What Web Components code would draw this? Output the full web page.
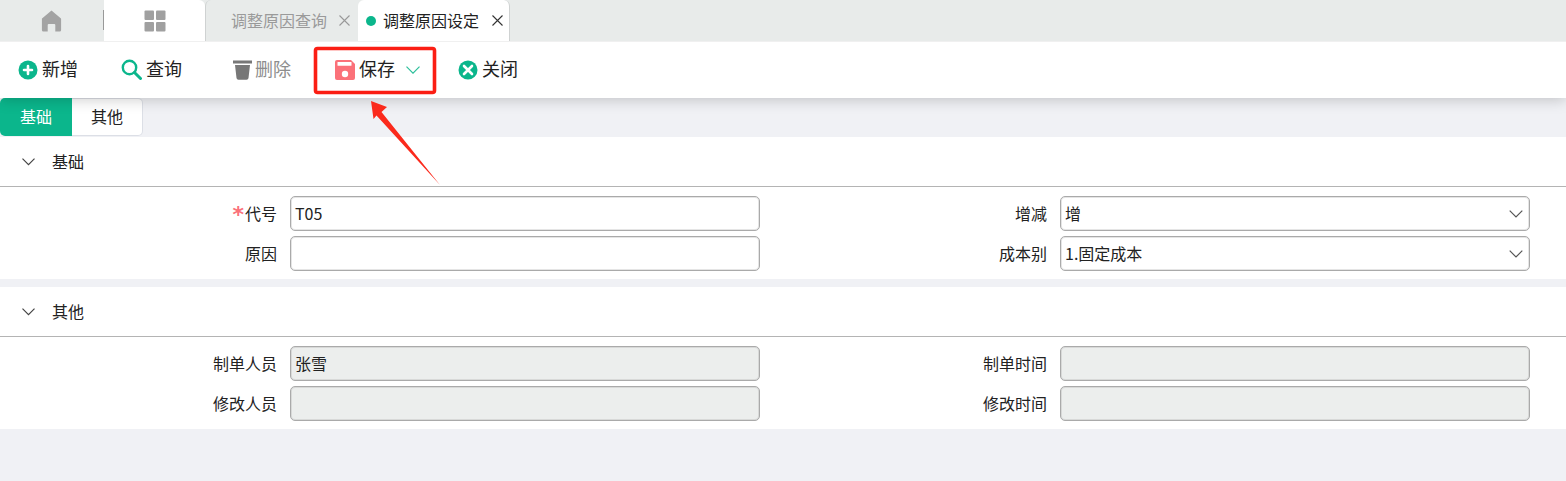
<!DOCTYPE html>
<html lang="zh-CN">
<head>
<meta charset="utf-8">
<title>调整原因设定</title>
<style>
html,body{margin:0;padding:0;height:100%;background:#f0f1f5;overflow:hidden}
body{position:relative;font:16px "Noto Sans CJK SC","Noto Sans",sans-serif;color:#222}
</style>
</head>
<body>
<app-tabs>
  <tab-item kind="home"><svg width="21" height="22" viewBox="0 0 21 22"><path d="M10.500.500 1.300 8.200a1 1 0 0 0-.4.800V20a1.500 1.500 0 0 0 1.500 1.500h4.300V15a1 1 0 0 1 1-1h5.600a1 1 0 0 1 1 1v6.500h4.300a1.500 1.500 0 0 0 1.500-1.500V9a1 1 0 0 0-.4-.8Z" fill="#a3a3a3"/></svg></tab-item>
  <tab-item kind="grid"><svg width="22" height="22" viewBox="0 0 22 22" fill="#a0a0a0"><rect x=".5" y=".5" width="9.500" height="9.500" rx="1"/><rect x="12" y=".5" width="9.500" height="9.500" rx="1"/><rect x=".5" y="12" width="9.500" height="9.500" rx="1"/><rect x="12" y="12" width="9.500" height="9.500" rx="1"/></svg></tab-item>
  <tab-item kind="page">调整原因查询</tab-item>
  <tab-item kind="page" active>调整原因设定</tab-item>
</app-tabs>

<app-toolbar>
  <tool-button style="margin-left:18px"><svg slot="icon" width="20" height="20" viewBox="0 0 20 20"><circle cx="10" cy="10" r="9.500" fill="#0bb68c"/><path d="M10 6v8M6 10h8" stroke="#fff" stroke-width="2.600" stroke-linecap="round"/></svg>新增</tool-button>
  <tool-button style="margin-left:43px"><svg slot="icon" width="21" height="21" viewBox="0 0 21 21" fill="none" stroke="#0bb68c"><circle cx="8.500" cy="8.500" r="6.700" stroke-width="2.400"/><path d="m13.500 13.500 6 6" stroke-width="3" stroke-linecap="round"/></svg>查询</tool-button>
  <tool-button style="margin-left:51px" disabled><svg slot="icon" width="19" height="20" viewBox="0 0 19 20" fill="#777" style="margin-right:-1px"><rect x="0" y="0.500" width="19" height="3"/><path d="M2 5h15l-1.500 13a2 2 0 0 1-2 1.800h-8a2 2 0 0 1-2-1.800Z"/></svg>删除</tool-button>
  <tool-button style="margin-left:44px"><svg slot="icon" width="20" height="20" viewBox="0 0 20 20"><path d="M2 0h14l4 4v14a2 2 0 0 1-2 2H2a2 2 0 0 1-2-2V2a2 2 0 0 1 2-2Z" fill="#fb7179"/><rect x="2.500" y="2" width="14" height="3.800" rx=".5" fill="#fff"/><circle cx="10" cy="14" r="3.200" fill="#fff"/></svg>保存<svg slot="after" width="14" height="8" viewBox="0 0 14 8" fill="none" stroke="#2dbf9b" stroke-width="1.200"><path d="m.5.700 6.500 6.500L13.500.7"/></svg></tool-button>
  <tool-button style="margin-left:38px"><svg slot="icon" width="20" height="20" viewBox="0 0 20 20"><circle cx="10" cy="10" r="9.500" fill="#0bb68c"/><path d="m6 6 8 8M14 6l-8 8" stroke="#fff" stroke-width="2.600" stroke-linecap="round"/></svg>关闭</tool-button>
</app-toolbar>

<form-tabs></form-tabs>

<form-section heading="基础">
  <form-field label="代号" required value="T05"></form-field>
  <form-field label="增减" select value="增"></form-field>
  <form-field label="原因"></form-field>
  <form-field label="成本别" select value="1.固定成本"></form-field>
</form-section>

<form-section heading="其他" style="margin-top:8px">
  <form-field label="制单人员" disabled value="张雪"></form-field>
  <form-field label="制单时间" disabled></form-field>
  <form-field label="修改人员" disabled></form-field>
  <form-field label="修改时间" disabled></form-field>
</form-section>

<call-out></call-out>

<script>
const shadow = (el, html) => { el.attachShadow({mode:'open'}).innerHTML = html; };

customElements.define('app-tabs', class extends HTMLElement {
  constructor(){ super(); shadow(this, `<style>
    :host{display:flex;height:41px;background:#e8ebea;box-sizing:border-box}
  </style><slot></slot>`); }
});

customElements.define('tab-item', class extends HTMLElement {
  constructor(){ super();
    const kind = this.getAttribute('kind');
    const active = this.hasAttribute('active');
    const extra = kind === 'page'
      ? `${active ? '<i class="dot"></i>' : ''}<span class="t"><slot></slot></span><svg class="x" width="11" height="11" viewBox="0 0 11 11" fill="none" stroke="${active ? '#333' : '#999'}" stroke-width="1.100"><path d="m.5.500 10 10M10.500.500l-10 10"/></svg>`
      : `<slot></slot>`;
    shadow(this, `<style>
      :host{display:flex;align-items:center;box-sizing:border-box;height:41px;flex:none;font-size:16px}
      :host([kind=home]){width:104px;padding-left:41px;position:relative}
      :host([kind=home])::after{content:"";position:absolute;right:0;top:10px;height:20px;width:1px;background:#999}
      :host([kind=grid]){width:101px;background:#fff;padding-left:40px;border-top-right-radius:6px}
      :host([kind=page]){width:153px;padding-left:25px;border-left:1px solid #cfd2d2;border-top-left-radius:6px;color:#9a9a9a}
      :host([kind=page][active]){width:152px;padding-left:8px;background:#fff;color:#222;border-left:0;border-right:1px solid #cfd2d2;border-top-right-radius:6px;border-top-left-radius:6px}
      svg{display:block}
      .dot{width:10px;height:10px;border-radius:50%;background:#0bb68c;margin-right:7px;flex:none}
      .t{white-space:nowrap;line-height:24px;padding-bottom:2px}
      .x{margin-left:12px;flex:none}
      :host([active]) .x{margin-left:13px}
    </style>${extra}`);
  }
});

customElements.define('app-toolbar', class extends HTMLElement {
  constructor(){ super(); shadow(this, `<style>
    :host{display:flex;align-items:center;box-sizing:border-box;height:57px;background:#fff;border-top:1px solid #f0f0f0;position:relative;z-index:2;box-shadow:0 1px 14px rgba(0,0,0,.22);clip-path:inset(0 0 -24px 0)}
  </style><slot></slot>`); }
});

customElements.define('tool-button', class extends HTMLElement {
  constructor(){ super(); shadow(this, `<style>
    :host{display:inline-flex;align-items:center;font-size:18px;line-height:26px;color:#222;white-space:nowrap;padding-bottom:5px}
    :host([disabled]){color:#8d8d8d}
    .i{display:flex;margin-right:4px;margin-top:4px}
    .a{display:flex;margin-top:5px}
    ::slotted([slot=after]){margin-left:11px}
  </style><span class="i"><slot name="icon"></slot></span><slot></slot><span class="a"><slot name="after"></slot></span>`); }
});

customElements.define('form-tabs', class extends HTMLElement {
  constructor(){ super(); shadow(this, `<style>
    :host{display:flex;height:39px;box-sizing:border-box;padding-bottom:1px;font-size:16px;line-height:36px;text-align:center}
    div{box-sizing:border-box;height:38px}
    .on{width:72px;background:#0bb68c;color:#fff;border-radius:5px 0 0 5px}
    .off{width:71px;background:#fff;color:#222;border:1px solid #dcdfe6;border-left:0;border-radius:0 5px 5px 0;line-height:34px}
  </style><div class="on">基础</div><div class="off">其他</div>`); }
});

customElements.define('form-section', class extends HTMLElement {
  constructor(){ super(); shadow(this, `<style>
    :host{display:block;background:#fff}
    header{display:flex;align-items:center;box-sizing:border-box;border-bottom:1px solid #b4b4b4;height:50px;padding-left:22px;font-size:16px;color:#222}
    header span{padding-bottom:2px}
    svg{margin-right:17px;display:block}
    .g{display:grid;grid-template-columns:760px 770px;row-gap:5px;padding:9px 0 8px}
  </style><header><svg width="13" height="8" viewBox="0 0 13 8" fill="none" stroke="#444" stroke-width="1.200"><path d="m.5.700 6 6 6-6"/></svg><span>${this.getAttribute('heading')}</span></header><div class="g"><slot></slot></div>`); }
});

customElements.define('form-field', class extends HTMLElement {
  constructor(){ super();
    const value = this.getAttribute('value') || '';
    const req = this.hasAttribute('required') ? '<span class="req">*</span>' : '';
    const arrow = this.hasAttribute('select') ? '<svg width="14" height="8" viewBox="0 0 14 8" fill="none" stroke="#555" stroke-width="1.200"><path d="m.7.700 6.300 6.300L13.300.7"/></svg>' : '';
    shadow(this, `<style>
      :host{display:grid;grid-template-columns:1fr 470px;column-gap:13px;align-items:center;font-size:16px;color:#222}
      label{text-align:right;white-space:nowrap;line-height:24px;padding-bottom:2px}
      .req{color:#fb7179;font:bold 22px/14px "DejaVu Sans",sans-serif;margin-right:1px;display:inline-block;vertical-align:-2px}
      .box{display:flex;align-items:center;justify-content:space-between;box-sizing:border-box;height:35px;border:1px solid #aaa;border-radius:5px;padding:0 6px 0 4px;background:#fff;line-height:24px;box-shadow:inset 0 0 0 1px rgba(170,170,170,.3)}
      .box span{padding-bottom:2px}
      :host([disabled]) .box{background:#eceeed}
      svg{display:block}
    </style><label>${req}${this.getAttribute('label')}</label><div class="box"><span>${value}</span>${arrow}</div>`);
  }
});

customElements.define('call-out', class extends HTMLElement {
  constructor(){ super(); shadow(this, `<style>
    :host{position:absolute;inset:0;z-index:5;pointer-events:none;display:block}
    svg{display:block}
  </style><svg width="1566" height="481" viewBox="0 0 1566 481"><rect x="315.500" y="48.500" width="119" height="44" rx="2" fill="none" stroke="#fb1e14" stroke-width="3.600"/><path d="M371 101 387 107 381.500 112 440 185 376.500 115.500 373.500 119Z" fill="#fb2a1c"/></svg>`); }
});
</script>
</body>
</html>
